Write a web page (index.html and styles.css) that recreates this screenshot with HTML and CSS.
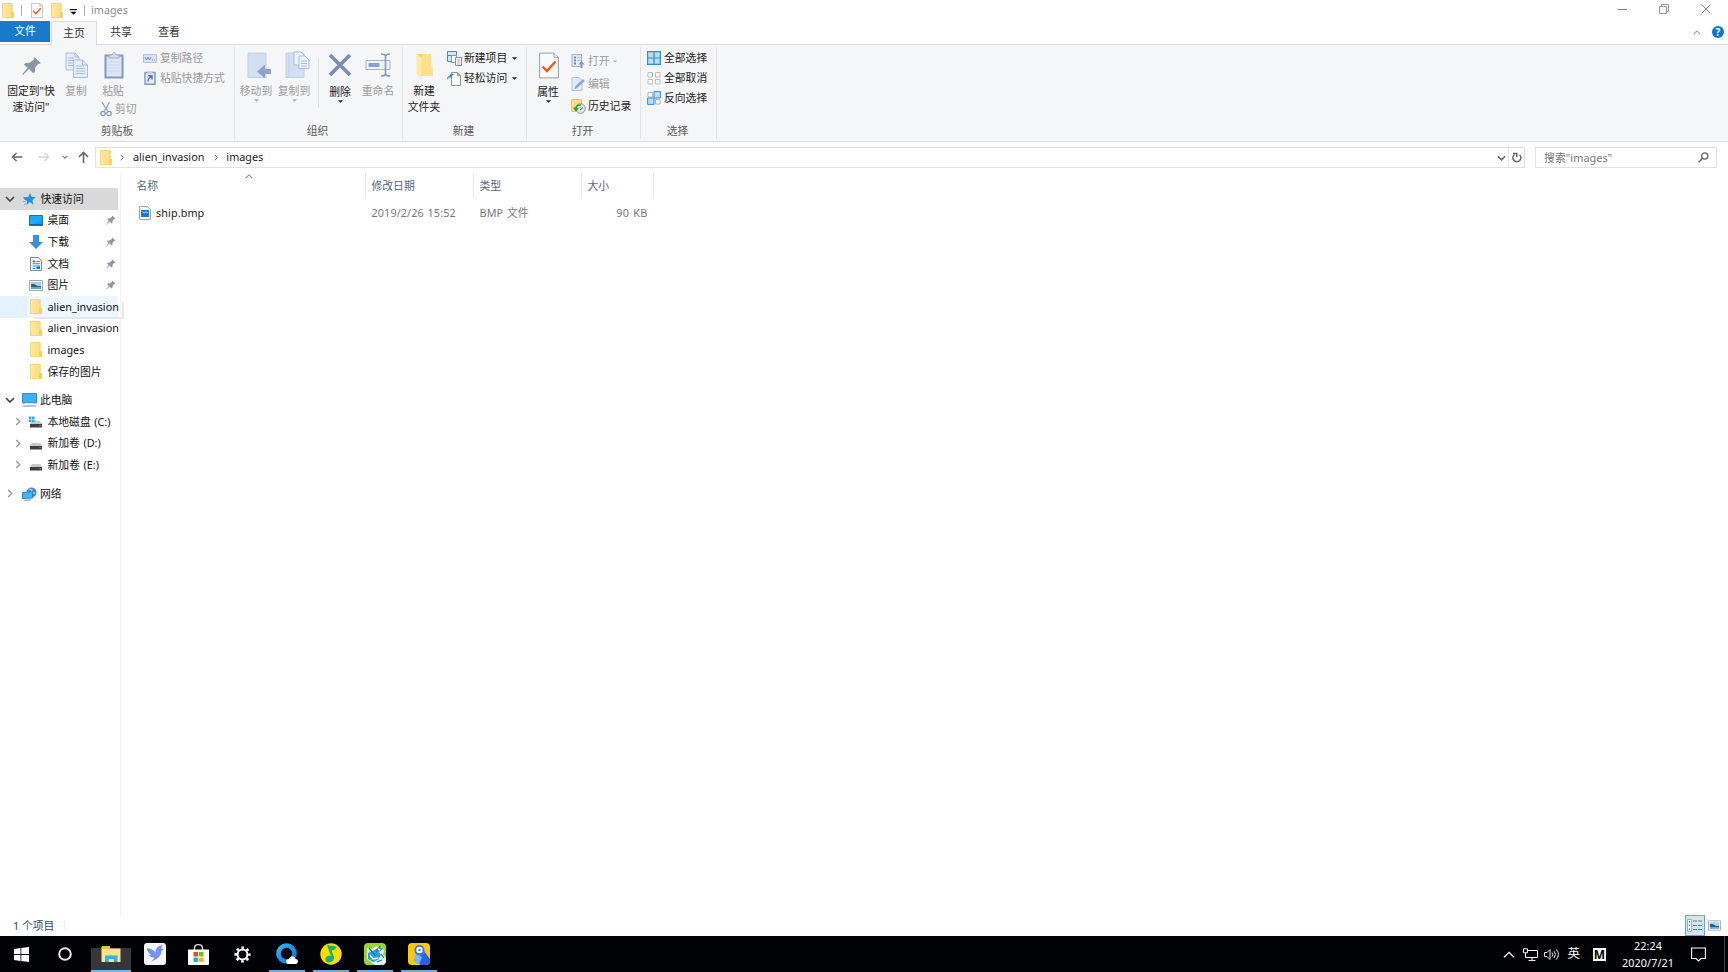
FILE: index.html
```html
<!DOCTYPE html>
<html lang="zh-CN">
<head>
<meta charset="utf-8">
<title>images</title>
<link rel="stylesheet" href="styles.css">
</head>
<body>
<svg class="defs" width="0" height="0">
  <defs>
    <linearGradient id="fg" x1="0" x2="1"><stop offset="0" stop-color="#ffe9a2"/><stop offset="1" stop-color="#fbdc75"/></linearGradient>
    <linearGradient id="blue" x1="0" y1="0" x2="1" y2="1"><stop offset="0" stop-color="#2a9df4"/><stop offset=".5" stop-color="#18b0ff"/><stop offset="1" stop-color="#0a8cf0"/></linearGradient>
    <linearGradient id="bird" x1="0" y1="0" x2="1" y2="1"><stop offset="0" stop-color="#4ba2fb"/><stop offset="1" stop-color="#9a86ef"/></linearGradient>
    <linearGradient id="ring" x1="0" y1="0" x2="1" y2="1"><stop offset="0" stop-color="#31b4fa"/><stop offset="1" stop-color="#0a6fdc"/></linearGradient>
  </defs>
  <symbol id="folder" viewBox="0 0 12 15"><path d="M.4.5h9.800v9h1.300v5H.4z" fill="url(#fg)" stroke="#ecc95c" stroke-width=".7"/><path d="M9.200 9.500h2.300v5H9.200z" fill="#f3cd5d"/></symbol>
  <symbol id="pin" viewBox="0 0 20 20"><path d="M12 1l7 6-2 1-1 0-3 4 0 4-2 1-4-4-6 6-.7-.7L5.500 12 2 8.500l1.500-1.500 4-.2L11.500 4z" fill="#8a97a3"/></symbol>
  <symbol id="right" viewBox="0 0 6 10"><path d="M1 1l4 4-4 4" fill="none" stroke="currentColor" stroke-width="1.500"/></symbol>
  <symbol id="down" viewBox="0 0 10 6"><path d="M1 1l4 4 4-4" fill="none" stroke="currentColor" stroke-width="1.700"/></symbol>
  <symbol id="tri" viewBox="0 0 6 3"><path d="M0 0h6L3 3z" fill="currentColor"/></symbol>
  <symbol id="check" viewBox="0 0 20 26"><path d="M.6.6h14.400l4.400 4.400v20.400H.6z" fill="#fafafa" stroke="#9b9b9b"/><path d="M15 .6V5h4.400" fill="#e5e5e5" stroke="#9b9b9b" stroke-width=".8"/><path d="M3.500 14l4.500 4.500L16.500 9" fill="none" stroke="#f05a1c" stroke-width="2.400"/></symbol>
  <symbol id="drive" viewBox="0 0 14 9"><path d="M3 2h8l2.500 3h-13z" fill="#c6c8ca"/><path d="M1 5h12v3.500H1z" fill="#3b4042"/><path d="M10.500 6.700h1.500" stroke="#35c85a" stroke-width="1"/></symbol>
  <symbol id="picture" viewBox="0 0 14 11"><path d="M.5.500h13v10H.5z" fill="#fff" stroke="#a4a8ac"/><path d="M2 2h10v4H2z" fill="#9fd2f6"/><path d="M2 4l3 0 3.500 2H12v1.500H2z" fill="#2c6077"/><path d="M2 7.300h10V9H2z" fill="#5aa3d0"/></symbol>
</svg>

<div class="window">
  <header class="titlebar">
    <div class="quick">
      <svg class="q-folder"><use href="#folder"/></svg><i class="q-sep"></i>
      <svg class="q-doc"><use href="#check"/></svg>
      <svg class="q-folder"><use href="#folder"/></svg>
      <svg class="q-more" viewBox="0 0 7 6"><path d="M0 .6h7" stroke="#000" stroke-width="1.100"/><path d="M.5 2.800h6L3.500 5.800z" fill="#000"/></svg>
      <i class="q-sep"></i><span class="title">images</span>
    </div>
    <div class="controls">
      <svg width="9" height="9" viewBox="0 0 9 9"><path d="M0 4.500h9" stroke="#777"/></svg>
      <svg width="10" height="10" viewBox="0 0 10 10"><path d="M.5 2.500h7v7h-7zM2.500 2.500v-2h7v7h-2" fill="none" stroke="#888" stroke-width=".9"/></svg>
      <svg width="10" height="10" viewBox="0 0 10 10"><path d="M.5.500l9 9M9.500.500l-9 9" stroke="#777" stroke-width=".9"/></svg>
    </div>
  </header>

  <nav class="tabs">
    <span class="tab file">文件</span><span class="tab active">主页</span><span class="tab">共享</span><span class="tab">查看</span>
    <span class="help">
      <svg width="8" height="5" viewBox="0 0 10 6"><path d="M1 5l4-4 4 4" fill="none" stroke="#999" stroke-width="1.300"/></svg>
      <b>?</b>
    </span>
  </nav>

  <section class="ribbon">
    <div class="group g-clip">
      <div class="tools">
        <div class="big pinbtn"><svg width="20" height="20"><use href="#pin"/></svg><span>固定到"快<br>速访问"</span></div>
        <div class="big dim copy"><svg width="24" height="27" viewBox="0 0 24 27"><g fill="#e4edf8" stroke="#a7b8d2" stroke-width=".9"><path d="M1 1h9l4 4v13H1z"/><path d="M8.500 8h9l5 5v12.500h-14z"/></g><path d="M3 6h6M3 8.500h5M3 11h5M3 13.500h5M11 14h8M11 16.500h9M11 19h9M11 21.500h9" stroke="#a9bedd"/><path d="M17.500 8v5h5M10 1v4h4" fill="none" stroke="#a7b8d2"/></svg><span>复制</span></div>
        <div class="pastecol dim">
          <div class="big"><svg width="20" height="27" viewBox="0 0 20 27"><path d="M1.500 3.500h17v22h-17z" fill="#dce7f6" stroke="#8298c1" stroke-width="2"/><path d="M4 10h12M4 13h12M4 16h12M4 19h12" stroke="#c5d4e9" stroke-width=".7"/><path d="M5 3h3c0-3 4-3 4 0h3v3H5z" fill="#d4dce8" stroke="#a4afc0"/></svg><span>粘贴</span></div>
          <div class="row"><svg width="12" height="15" viewBox="0 0 12 15"><path d="M2 0l5.500 9M9.500 0L4.500 9" stroke="#93a3bf" stroke-width="1.300" fill="none"/><circle cx="3" cy="11.500" r="2.200" fill="none" stroke="#7f93b8" stroke-width="1.200"/><circle cx="9" cy="11.500" r="2.200" fill="none" stroke="#7f93b8" stroke-width="1.200"/></svg><span>剪切</span></div>
        </div>
        <div class="rows r-clip dim">
          <div class="row"><svg width="14" height="9" viewBox="0 0 14 9"><path d="M.5.500h13v8H.5z" fill="#d9e5f5" stroke="#b1c3df"/><path d="M2 3l1.500 3L5 3l1.500 3L8 3M9 6h1M11 6h1" fill="none" stroke="#647fae" stroke-width=".9"/></svg><span>复制路径</span></div>
          <div class="row"><svg width="12" height="14" viewBox="0 0 12 14"><path d="M1 1.500h10v11.800H1z" fill="#e3ecf8" stroke="#8197bf" stroke-width="1.400"/><path d="M3.500.3h5v2h-5z" fill="#c6cfdd"/><path d="M4 10.500c0-2.500 1-4 3.500-5.500M4.200 4.700h3.800v3.800" fill="none" stroke="#5874a8" stroke-width="1.400"/></svg><span>粘贴快捷方式</span></div>
        </div>
      </div>
      <div class="label">剪贴板</div>
    </div>

    <div class="group g-org">
      <div class="tools">
        <div class="big dim w38"><svg class="shift" width="25" height="27" viewBox="0 0 25 27"><path d="M1 1h18v24.500H1z" fill="#d2dff0" stroke="#c2d1e7"/><path d="M24 17h-6v-4.500l-8 7 8 7V22h6z" fill="#8da2c8"/></svg><span>移动到</span><svg class="tri"><use href="#tri"/></svg></div>
        <div class="big dim w38"><svg class="shift" width="25" height="27" viewBox="0 0 25 27"><path d="M1 1h18v24.500H1z" fill="#d2dff0" stroke="#c2d1e7"/><path d="M4 1v24" stroke="#c2d1e7"/><g fill="#edf3fb" stroke="#a5b7d2" stroke-width=".9"><path d="M9 0h7l3 3v10H9z"/><path d="M14 4h6l4 4v8.500H14z"/></g><path d="M16 9h6M16 11.500h6M16 14h6" stroke="#a9bedd"/></svg><span>复制到</span><svg class="tri"><use href="#tri"/></svg></div>
        <i class="inner-sep"></i>
        <div class="big w38 del"><svg width="24" height="26" viewBox="0 0 24 26"><path d="M2 3l20 20M22 3L2 23" stroke="#7b8db1" stroke-width="3.800"/></svg><span>删除</span><svg class="tri"><use href="#tri"/></svg></div>
        <div class="big dim w38"><svg width="27" height="27" viewBox="0 0 27 27"><path d="M1 8.500h24v9H1z" fill="#eef3fa" stroke="#a3b4d0"/><path d="M3.500 11h11v4h-11z" fill="#8ba1c7"/><path d="M16 2c3 0 4 .5 4.500 2 .5-1.500 1.500-2 4.500-2M16 24c3 0 4-.5 4.500-2 .5 1.500 1.500 2 4.500 2M20.500 3v20" fill="none" stroke="#8398bd" stroke-width="1.600"/></svg><span>重命名</span></div>
      </div>
      <div class="label">组织</div>
    </div>

    <div class="group g-new">
      <div class="tools">
        <div class="big newf"><svg width="17" height="27" viewBox="0 0 17 27"><path d="M.5 2H15v12l1.500 2v8H4z" fill="#f4d06a"/><path d="M5.500 2H15v12.500l1.500 1.500v8h-11z" fill="#fce08a"/><path d="M.5 2l5 3.500V26l-5-3.500z" fill="#ffe9a6"/></svg><span>新建<br>文件夹</span></div>
        <div class="rows r-new">
          <div class="row"><svg width="15" height="15" viewBox="0 0 15 15"><path d="M.5.500h9v4h-9zM.5 4.500h5v6h-5z" fill="#cfeafb" stroke="#5488a5"/><path d="M4.500 4.500h5v7h-5z" fill="#fff" stroke="#819aab"/><path d="M8.500 6.500h6v8h-6z" fill="#fff" stroke="#80919c"/><path d="M10 9h3M10 11h3M10 13h3" stroke="#d36e5c" stroke-width=".7"/></svg><span>新建项目</span><svg class="tri"><use href="#tri"/></svg></div>
          <div class="row"><svg width="15" height="15" viewBox="0 0 15 15"><path d="M4.500 1.500h6l3 3v10h-9z" fill="#fff" stroke="#8b9196"/><path d="M10.500 1.500v3h3" fill="none" stroke="#8b9196"/><path d="M3.500 3H7L4.500 5.500 5 6.500H1.500L1 9.500 0 6.500 3 4.500z" fill="#2587cc"/></svg><span>轻松访问</span><svg class="tri"><use href="#tri"/></svg></div>
        </div>
      </div>
      <div class="label">新建</div>
    </div>

    <div class="group g-open">
      <div class="tools">
        <div class="big prop"><svg width="20" height="27"><use href="#check"/></svg><span>属性</span><svg class="tri"><use href="#tri"/></svg></div>
        <div class="rows r-open">
          <div class="row dim"><svg width="14" height="14" viewBox="0 0 14 14"><path d="M.5.500h9.500v12H.5z" fill="#e4edf8" stroke="#9baece"/><path d="M2.500 3.500h2M2.500 6.500h2M2.500 9.500h2" stroke="#6a85b4" stroke-width="1.800"/><path d="M6 3.500h3M6 6.500h3" stroke="#9eb2d2"/><path d="M9 14V10.500H6.800L10 7l3.200 3.500H11V14z" fill="#7e96c0"/></svg><span>打开</span><svg class="tri"><use href="#tri"/></svg></div>
          <div class="row dim"><svg width="14" height="14" viewBox="0 0 14 14"><path d="M.5.500h7l3 3v10H.5z" fill="#dfebf9" stroke="#b4c4da"/><path d="M3 12l1-3 7.500-7 2 2-8 7z" fill="#91a8ce"/></svg><span>编辑</span></div>
          <div class="row"><svg width="15" height="15" viewBox="0 0 15 15"><path d="M.5.500h10v12H.5z" fill="#fbdf82" stroke="#e9c860"/><circle cx="9.500" cy="9.500" r="4.800" fill="#dce8df" stroke="#8a9a8e"/><path d="M5 10.500C4.500 7 7 5.500 10 6M2.800 8.500l2.200 3 2-2.500" fill="none" stroke="#22a13d" stroke-width="1.500"/><path d="M9 11l3-2.500" stroke="#667" stroke-width=".9"/></svg><span>历史记录</span></div>
        </div>
      </div>
      <div class="label">打开</div>
    </div>

    <div class="group g-sel">
      <div class="tools">
        <div class="rows r-sel">
          <div class="row"><svg width="14" height="14" viewBox="0 0 14 14"><path d="M.6.600h12.800v12.800H.6zM7 0v14M0 7h14" fill="#b7defa" stroke="#2f90d8" stroke-width="1.200"/></svg><span>全部选择</span></div>
          <div class="row"><svg width="14" height="14" viewBox="0 0 14 14"><path d="M1 1.500h4.500V6H1zM8.500 1.500H13V6H8.500zM1 8.500h4.500V13H1zM8.500 8.500H13V13H8.500z" fill="#fff" stroke="#b5b5b5" stroke-width=".9"/></svg><span>全部取消</span></div>
          <div class="row"><svg width="14" height="14" viewBox="0 0 14 14"><path d="M1 1.500h4.500V6H1zM8.500 8.500H13V13H8.500z" fill="#fff" stroke="#aaa" stroke-width=".9"/><path d="M7 .6h6.400V7H7zM.6 7H7v6.400H.6z" fill="#b7defa" stroke="#2f90d8"/></svg><span>反向选择</span></div>
        </div>
      </div>
      <div class="label">选择</div>
    </div>
  </section>

  <section class="address">
    <div class="nav">
      <svg width="12" height="10" viewBox="0 0 13 11"><path d="M12.500 5.500h-11M6 1L1.500 5.500 6 10" fill="none" stroke="#666" stroke-width="1.600"/></svg>
      <svg width="12" height="10" viewBox="0 0 13 11"><path d="M.5 5.500h11M7 1l4.500 4.500L7 10" fill="none" stroke="#d5d5d5" stroke-width="1.600"/></svg>
      <svg width="6" height="4"><use href="#down"/></svg>
      <svg width="11" height="12" viewBox="0 0 11 12"><path d="M5.500 12V1.500M1 6l4.500-4.500L10 6" fill="none" stroke="#666" stroke-width="1.600"/></svg>
    </div>
    <div class="path">
      <svg class="p-folder"><use href="#folder"/></svg>
      <svg class="sepch"><use href="#right"/></svg><span>alien_invasion</span>
      <svg class="sepch"><use href="#right"/></svg><span>images</span>
      <svg class="drop" width="9" height="6"><use href="#down"/></svg>
      <div class="refresh"><svg width="10" height="11" viewBox="0 0 10 11"><path d="M2.500 2.500A4 4 0 1 0 7.500 2.700M1 1.500h3.800v3.500" fill="none" stroke="#666" stroke-width="1.500"/></svg></div>
    </div>
    <div class="search"><span>搜索"images"</span><svg width="11" height="11" viewBox="0 0 11 11"><circle cx="6.800" cy="4" r="3.100" fill="none" stroke="#666" stroke-width="1.300"/><path d="M4.500 6.300L.7 10.200" stroke="#666" stroke-width="1.600"/></svg></div>
  </section>

  <main class="content">
    <aside class="side">
      <div class="item root sel"><svg class="ch" width="10" height="6"><use href="#down"/></svg><svg class="ic" width="13" height="12" viewBox="0 0 13 12"><path d="M7 0l1.500 3.800L13 4 9.500 7l.8 4.800L7 9l-3.500 3 .6-4L1.500 6.500 0 4.300l5.300-.3z" fill="#2591dc"/><path d="M0 8.500h3M1 11h2" stroke="#6fb9eb"/></svg><span>快速访问</span></div>
      <div class="item"><svg class="ic" width="14" height="11" viewBox="0 0 14 11"><path d="M.5.500h13v10H.5z" fill="url(#blue)" stroke="#0875c9"/><path d="M1 9.500h12" stroke="#0b65ae"/></svg><span>桌面</span><svg class="pn"><use href="#pin"/></svg></div>
      <div class="item"><svg class="ic" width="14" height="14" viewBox="0 0 14 14"><path d="M4 0h6v7h4l-7 7-7-7h4z" fill="#388fdd"/></svg><span>下载</span><svg class="pn"><use href="#pin"/></svg></div>
      <div class="item"><svg class="ic" width="14" height="14" viewBox="0 0 14 14"><path d="M1.500.500h8l3 3v10h-11z" fill="#fff" stroke="#858b90"/><path d="M3.500 4.500h3M5 3v3M3.500 6.800H11M7.500 4.500H11M3.500 9h7.500M3.500 11.500h3" stroke="#2694d5" stroke-width="1.100"/><path d="M7.500 9.500H11V12H7.500z" fill="#2b7294"/></svg><span>文档</span><svg class="pn"><use href="#pin"/></svg></div>
      <div class="item"><svg class="ic" width="14" height="11"><use href="#picture"/></svg><span>图片</span><svg class="pn"><use href="#pin"/></svg></div>
      <div class="item hover"><svg class="ic fo"><use href="#folder"/></svg><span>alien_invasion</span><i class="ghost"></i></div>
      <div class="item"><svg class="ic fo"><use href="#folder"/></svg><span>alien_invasion</span></div>
      <div class="item"><svg class="ic fo"><use href="#folder"/></svg><span>images</span></div>
      <div class="item"><svg class="ic fo"><use href="#folder"/></svg><span>保存的图片</span></div>
      <div class="item root gap"><svg class="ch" width="10" height="6"><use href="#down"/></svg><svg class="ic pc" width="15" height="14" viewBox="0 0 15 14"><path d="M.5.500h14v9.500H.5z" fill="#36b5fb" stroke="#3f87b5"/><path d="M3 10h9v1.200H3z" fill="#dce6ed"/><path d="M1 13h13" stroke="#8eabc0" stroke-width="1.300"/></svg><span>此电脑</span></div>
      <div class="item leaf"><svg class="ch" width="6" height="9"><use href="#right"/></svg><svg class="ic" width="14" height="12" viewBox="0 0 14 12"><use href="#drive" y="3" width="14" height="9"/><path d="M0 .5h2.500V3H0zM3 .5h2.500V3H3zM0 3.500h2.500V6H0zM3 3.500h2.500V6H3z" fill="#13b5ed"/></svg><span>本地磁盘 (C:)</span></div>
      <div class="item leaf"><svg class="ch" width="6" height="9"><use href="#right"/></svg><svg class="ic dr" width="14" height="9"><use href="#drive"/></svg><span>新加卷 (D:)</span></div>
      <div class="item leaf"><svg class="ch" width="6" height="9"><use href="#right"/></svg><svg class="ic dr" width="14" height="9"><use href="#drive"/></svg><span>新加卷 (E:)</span></div>
      <div class="item root gap net"><svg class="ch" width="6" height="9"><use href="#right"/></svg><svg class="ic pc" width="15" height="14" viewBox="0 0 15 14"><circle cx="9.500" cy="5.500" r="5" fill="#3e8bbd"/><path d="M7 2l3 1-1 3 4 0" fill="none" stroke="#a7dcf3" stroke-width="1.300"/><path d="M.5 5.500l10-1v6.500l-10 .5z" fill="#3db8fa" stroke="#2c86bd"/><path d="M2.500 13.300l6-.5" stroke="#7aa9c9" stroke-width="1.200"/></svg><span>网络</span></div>
    </aside>
    <div class="list">
      <div class="head"><span>名称<svg class="sort" width="8" height="5" viewBox="0 0 10 6"><path d="M1 5l4-4 4 4" fill="none" stroke="#888" stroke-width="1.300"/></svg></span><span>修改日期</span><span>类型</span><span>大小</span></div>
      <div class="file-row"><span class="name"><svg width="12" height="14" viewBox="0 0 12 14"><path d="M.5.500h8l3 3v10H.5z" fill="#f7f7f7" stroke="#a3a3a3"/><path d="M2 4h8v7H2z" fill="#1878d4"/><path d="M3 5.500l2 1.500L7 6l2 1" fill="none" stroke="#a8daff" stroke-width="1"/></svg>ship.bmp</span><span>2019/2/26 15:52</span><span>BMP 文件</span><span class="size">90 KB</span></div>
    </div>
  </main>

  <footer class="status">
    <span>1 个项目</span>
    <div class="views">
      <div class="v-on"><svg width="16" height="13" viewBox="0 0 16 13"><path d="M.5.500h4v12h-4z" fill="#fff" stroke="#999" stroke-width=".8"/><path d="M2.500 2v1.500M2.500 5.500V7" stroke="#777" stroke-width="1.200"/><path d="M2.500 9.500V11" stroke="#e44" stroke-width="1.200"/><path d="M6 2h4M11 2h4M6 6.500h4M11 6.500h4M6 10.500h4M11 10.500h4" stroke="#777"/></svg></div>
      <svg width="13" height="11"><use href="#picture"/></svg>
    </div>
  </footer>
</div>

<footer class="taskbar">
  <div class="apps">
    <div class="app"><svg width="15" height="15" viewBox="0 0 15 15"><path d="M0 2l6.500-.9v6H0zM7.300 1L15 0v7.100H7.300zM0 7.900h6.500v6L0 13zM7.300 7.900H15V15l-7.700-1z" fill="#fff"/></svg></div>
    <div class="app"><svg width="14" height="14" viewBox="0 0 14 14"><circle cx="7" cy="7" r="5.800" fill="none" stroke="#e7e7e7" stroke-width="2"/></svg></div>
    <div class="app current"><svg width="20" height="17" viewBox="0 0 20 17"><path d="M.5 1h8l1 1.500H19.500V16H.5z" fill="#ffe38d"/><path d="M1 0h8v3H1z" fill="#edbd32"/><path d="M4 16v-6.500h12.500V16h-3.700v-3H7.700v3z" fill="#31b0eb"/></svg></div>
    <div class="app"><svg width="22" height="22" viewBox="0 0 22 22"><rect width="22" height="22" rx="3" fill="#f4f5fd"/><path d="M2.500 5C6 5.500 9 6.500 11.500 9.500 11.500 6 13 3.500 18.500 2c-.8 1.500-1 2.500-.8 3.800L20 6.500l-2.500 1.300C17.500 14 12 16.500 7 19c2-2 3-3 3-4.500-2.500 0-4-.8-5-2.500l2.200-.2C4.500 10 3 8 2.500 5z" fill="url(#bird)"/></svg></div>
    <div class="app"><svg width="21" height="21" viewBox="0 0 21 21"><path d="M6.500 6V4c0-4.500 8-4.500 8 0v2" fill="none" stroke="#ddd" stroke-width="1.400"/><path d="M0 5.500h21V20q0 1-1 1H1q-1 0-1-1z" fill="#fff"/><path d="M5.500 8H10v4.500H5.500z" fill="#f04c24"/><path d="M11 8h4.500v4.500H11z" fill="#7ebb16"/><path d="M5.500 13.500H10V18H5.500z" fill="#1ba8ed"/><path d="M11 13.500h4.500V18H11z" fill="#ffb900"/></svg></div>
    <div class="app"><svg width="17" height="17" viewBox="0 0 17 17"><circle cx="8.500" cy="8.500" r="4.900" fill="none" stroke="#fff" stroke-width="2"/><circle cx="8.500" cy="8.500" r="6.800" fill="none" stroke="#fff" stroke-width="2.600" stroke-dasharray="2.600 2.740" stroke-dashoffset="1.300"/></svg></div>
    <div class="app run"><svg width="22" height="22" viewBox="0 0 22 22"><circle cx="10.500" cy="10.500" r="8" fill="none" stroke="url(#ring)" stroke-width="4.600"/><path d="M12.500 21c-3.500-.5-3-5 .5-5 1-4 6-3.500 6.500 0 3.500 0 3.500 4.700 0 5z" fill="#fff"/></svg></div>
    <div class="app run"><svg width="22" height="22" viewBox="0 0 22 22"><circle cx="11" cy="11" r="10.700" fill="#ffdc00"/><path d="M7 1.500c3 2 6 .5 10 2.500l-3 3-2.500.3 2.500 7c.8 4.500-6 7-8.300 3.500-1.500-3.500 2-5.500 5.300-4.800L8 5z" fill="#12b37a"/></svg></div>
    <div class="app run"><svg width="22" height="22" viewBox="0 0 22 22"><rect width="22" height="22" rx="4" fill="#9bd52c"/><path d="M3 5l5 1 5-3 7 4-1 4 3 4v3q-1 4-4 4h-7l-8-6z" fill="#e4f4f6"/><path d="M4 10l5-2 6-4 4 2-4 3 2 3-3 5-5 2-5-3z" fill="#239ed9"/><path d="M5 5l6 7M16 3l-4 6M13 19l5-2M17 11l3 4" stroke="#187b9e" stroke-width="1.200"/><path d="M6 12l3 4 5-1M14 6l2 1" fill="none" stroke="#fff" stroke-width="1.400"/></svg></div>
    <div class="app run"><svg width="22" height="22" viewBox="0 0 22 22"><rect width="22" height="22" rx="4" fill="#ffc90a"/><path d="M8 10l8-2 6 8v2q0 4-4 4h-6z" fill="#2860e8"/><path d="M8 10l6 4-2 5-2 2-5-3z" fill="#75b6ff"/><path d="M6.500 7a5 5 0 0 1 10 0v5h-7q-3-1-3-5z" fill="#3673f2"/><circle cx="11.500" cy="7" r="3.200" fill="#fff"/><circle cx="11.500" cy="7" r="1.200" fill="#3673f2"/></svg></div>
  </div>
  <div class="tray">
    <svg class="t-up" width="12" height="7" viewBox="0 0 12 7"><path d="M1 6.300l5-5 5 5" fill="none" stroke="#fff" stroke-width="1.300"/></svg>
    <svg class="t-net" width="15" height="13" viewBox="0 0 15 13"><path d="M5 2.500h9.500v7H4M9 9.500v3M5.500 12.400h7M.5.800h4v4h-4zM2.500 5v4.500H5" fill="none" stroke="#fff"/></svg>
    <svg class="t-vol" width="16" height="13" viewBox="0 0 16 13"><path d="M.5 4.500H3L6 1.500v10l-3-3H.5zM8 4.500q1.500 2 0 4M10 3q3 3.500 0 7M12.200 1.300q4.500 5.200 0 10.400" fill="none" stroke="#fff" stroke-width=".9"/></svg>
    <span class="t-ime">英</span><span class="t-m">M</span>
    <div class="clock"><span>22:24</span><span>2020/7/21</span></div>
    <svg class="t-msg" width="15" height="15" viewBox="0 0 15 15"><path d="M.6 1h13.800v10.500H10L7.500 14 5 11.500H.6z" fill="none" stroke="#fff" stroke-width="1.100"/></svg>
    <i class="peek"></i>
  </div>
</footer>
</body>
</html>
```

FILE: styles.css
```css
* { box-sizing: border-box; }
body {
  margin: 0; width: 1728px; height: 972px; overflow: hidden;
  display: flex; flex-direction: column; background: #fff; color: #222;
  font: 10.8px/16px "Noto Sans", "Noto Sans CJK SC", sans-serif;
  white-space: nowrap;
}
svg { display: block; flex: none; overflow: visible; }
.defs { position: absolute; }
.window { height: 936px; display: flex; flex-direction: column; }

.titlebar { height: 21px; display: flex; justify-content: space-between; }
.quick { display: flex; align-items: center; padding-left: 2px; height: 20px; }
.q-folder { width: 12px; height: 15px; }
.q-sep { width: 1px; height: 11px; background: #aaa; margin: 0 9px 0 7px; }
.q-doc { width: 12px; height: 15px; margin-right: 8px; }
.q-more { width: 7px; height: 6px; margin: 3px 0 0 7px; }
.title { color: #8d8d8d; margin-left: -3px; }
.controls { display: flex; gap: 32px; padding: 4px 17px 0 0; }
.controls svg:first-child { margin-top: 1px; }

.tabs { height: 24px; display: flex; border-bottom: 1px solid #dadbdc; color: #333; }
.tab { width: 48px; height: 23px; line-height: 22px; text-align: center; }
.tab.file { width: 50px; height: 21px; background: #1979ca; color: #fff; line-height: 20px; }
.tab.active { width: 46px; height: 24px; margin: 0 0 0 1px; background: #f5f6f7; border: 1px solid #dadbdc; border-bottom: 0; line-height: 21px; }
.help { display: flex; align-items: center; gap: 12px; margin-left: auto; padding: 0 4px 1px 0; }
.help svg { margin-right: 2px; position: relative; left: 3px; }
.help b { width: 12px; height: 12px; border-radius: 50%; background: #0877d1; color: #fff; font-size: 10px; line-height: 12px; text-align: center; }

.ribbon { height: 97px; display: flex; background: #f5f6f7; border-bottom: 1px solid #dadbdc; }
.group { height: 92px; margin-top: 2px; border-right: 1px solid #e2e3e4; display: flex; flex-direction: column; }
.tools { height: 76px; display: flex; padding-top: 5px; }
.label { text-align: center; color: #5a5a5a; line-height: 16px; }
.big { display: flex; flex-direction: column; align-items: center; color: #222; }
.big > svg:first-child { margin-bottom: 4px; }
.big span { text-align: center; line-height: 16px; }
.tri { width: 5px; height: 3px; color: #222; }
.dim, .dim .big, .big.dim { color: #9b9b9b; }
.dim .tri { color: #b0b0b0; }
.rows { display: flex; flex-direction: column; }
.row { display: flex; align-items: center; }

.g-clip { width: 235px; }
.pinbtn { width: 48px; margin-left: 7px; }
.pinbtn > svg:first-child { margin: 4px 0 7px 2px; }
.pinbtn span { line-height: 15.500px; }
.copy { width: 24px; margin-left: 9px; }
.copy svg { position: relative; left: 1px; }
.pastecol { width: 38px; margin-left: 12px; }
.pastecol .big { width: 26px; }
.pastecol .big svg { position: relative; left: 1px; }
.pastecol .row { gap: 3px; margin-top: 2px; }
.r-clip { margin: -2px 0 0 5px; gap: 4px; }
.r-clip .row { gap: 3px; height: 16px; }
.r-clip .row svg { width: 14px; }

.g-org { width: 168px; }
.g-org .tools { padding-left: 2px; }
.w38 { width: 38px; }
.shift { position: relative; left: 3px; }
.inner-sep { width: 1px; height: 50px; margin: 6px 2px 0 5px; background: #e2e3e4; }
.del > svg:first-child { margin-bottom: 6px; }

.g-new { width: 124px; }
.newf { width: 34px; margin-left: 4px; }
.newf span { line-height: 15.500px; }
.r-new { margin-left: 6px; gap: 4px; margin-top: -2px; }
.r-new .row { gap: 2px; height: 16px; }
.r-new .tri, .r-open .tri { margin-left: 3px; }
.r-open .tri { margin-left: 1px; width: 4px; }

.g-open { width: 114px; }
.g-new .label, .g-open .label, .g-org .label, .g-sel .label { padding-right: 2px; }
.prop { width: 24px; margin-left: 9px; }
.prop > svg:first-child { margin-bottom: 5px; position: relative; left: 1px; }
.r-open { margin: 1px 0 0 11px; gap: 6.500px; }
.r-open .row { gap: 2px; height: 16px; }
.r-open .row > svg:first-child { width: 15px; }

.g-sel { width: 76px; }
.r-sel { margin: -2px 0 0 6px; gap: 4px; }
.r-sel .row { gap: 3px; height: 16px; }

.address { height: 29px; display: flex; padding: 5px 11px 0 0; }
.nav { width: 95px; height: 20px; display: flex; align-items: center; padding-left: 11px; color: #777; }
.nav svg:nth-child(2) { margin-left: 15px; }
.nav svg:nth-child(3) { margin-left: 12px; }
.nav svg:nth-child(4) { margin-left: 10px; }
.path { width: 1430px; height: 21px; border: 1px solid #e1e1e1; display: flex; align-items: center; padding-left: 4px; }
.path span { line-height: 17px; height: 19px; }
.p-folder { width: 12px; height: 15px; }
.sepch { width: 4px; height: 7px; color: #666; margin: 0 9px 0 8px; }
.path span + .sepch { margin-left: 10px; margin-right: 8px; }
.drop { color: #666; margin-left: auto; }
.refresh { width: 16px; height: 19px; border-left: 1px solid #e1e1e1; margin-left: 2px; display: flex; align-items: center; justify-content: center; }
.search { width: 182px; height: 21px; margin-left: auto; border: 1px solid #e1e1e1; display: flex; align-items: center; justify-content: space-between; padding: 0 7px 0 8px; color: #777; letter-spacing: .1px; }

.content { flex: 1; min-height: 0; display: flex; padding-top: 2px; }
.side { width: 121px; height: 743px; padding-top: 15px; border-right: 1px solid #f2f2f2; color: #111; }
.item { width: 118px; height: 21.600px; display: flex; align-items: center; padding-left: 29px; position: relative; }
.item .ic { width: 14px; margin-right: 4.500px; }
.item .fo { height: 15px; width: 14px; }
.item span { word-spacing: .8px; }
.item .pn { width: 10px; height: 10px; margin-left: auto; margin-right: 2px; }
.item.root { padding-left: 5px; }
.root .ch { margin-right: 8px; color: #444; }
.root .ic { width: 13px; }
.root .pc { width: 15px; margin-left: -1px; margin-right: 3px; }
.item.sel { background: #d9d9d9; }
.item.gap { margin-top: 7px; }
.item.leaf { padding-left: 15px; }
.leaf .ch { margin-right: 8px; color: #999; }
.leaf .dr { margin-top: 4px; }
.net .ch { margin: 0 10px 0 2px; color: #999; }
.item.hover { background: linear-gradient(90deg, #e3f2ff 27px, #edf7ff 27px); }
.ghost { position: absolute; left: 34px; top: 6px; width: 90px; height: 17px; border: solid #e6e6e6; border-width: 0 2px 2px 0; }

.list { padding-left: 14px; }
.head { display: flex; height: 27px; color: #53657c; }
.head span { height: 25px; line-height: 25px; width: 108px; border-right: 1px solid #e5e5e5; padding-left: 5.500px; position: relative; }
.head span:first-child { width: 231px; padding-left: 1.500px; }
.head span:last-child { width: 72px; }
.sort { position: absolute; left: 110px; top: 1px; }
.file-row { display: flex; height: 25px; align-items: center; color: #777; }
.file-row span { width: 108px; padding-left: 5.500px; letter-spacing: .12px; word-spacing: .8px; }
.file-row .name { width: 231px; padding-left: 4px; display: flex; align-items: center; gap: 5px; color: #222; letter-spacing: .1px; }
.file-row .size { width: 72px; padding-right: 6.500px; text-align: right; letter-spacing: .3px; }

.status { height: 21px; display: flex; justify-content: space-between; padding-left: 13px; color: #2d4668; }
.status span { height: 10px; line-height: 11px; margin-top: 5px; width: 52px; border-right: 1px solid #eee; }
.views { display: flex; align-items: center; gap: 3px; padding-right: 7px; }
.v-on { width: 20px; height: 21px; background: #cce8f6; border: 1px solid #4eb1df; display: flex; align-items: center; justify-content: center; }

.taskbar { height: 36px; background: #010307; color: #fff; display: flex; justify-content: space-between; }
.apps { display: flex; }
.app { width: 44px; height: 36px; display: flex; align-items: center; justify-content: center; }
.app:first-child { width: 43px; }
.app:nth-child(2) { width: 43px; }
.app.current { width: 40px; height: 24px; margin: 12px 2px 0 5px; background: #36373b; border-bottom: 2px solid #73b7ea; padding-bottom: 9px; }
.app:nth-child(n+4) { padding-right: 1px; }
.app.run { width: 36px; margin: 0 4px; border-bottom: 2px solid #6ba9d8; padding: 2px 0 0; }
.tray { display: flex; align-items: center; }
.t-net { margin-left: 8px; }
.t-vol { margin-left: 6px; }
.t-ime { font-size: 12.500px; margin-left: 7px; }
.t-m { width: 13px; height: 13px; margin-left: 13px; background: #fff; color: #000; font: bold 12px/13px "Noto Sans", sans-serif; text-align: center; }
.clock { width: 64px; margin-left: 10px; display: flex; flex-direction: column; text-align: center; line-height: 17px; letter-spacing: .1px; }
.t-msg { margin-left: 11px; }
.peek { width: 1px; height: 36px; background: #444; margin: 0 3px 0 18px; }
```
